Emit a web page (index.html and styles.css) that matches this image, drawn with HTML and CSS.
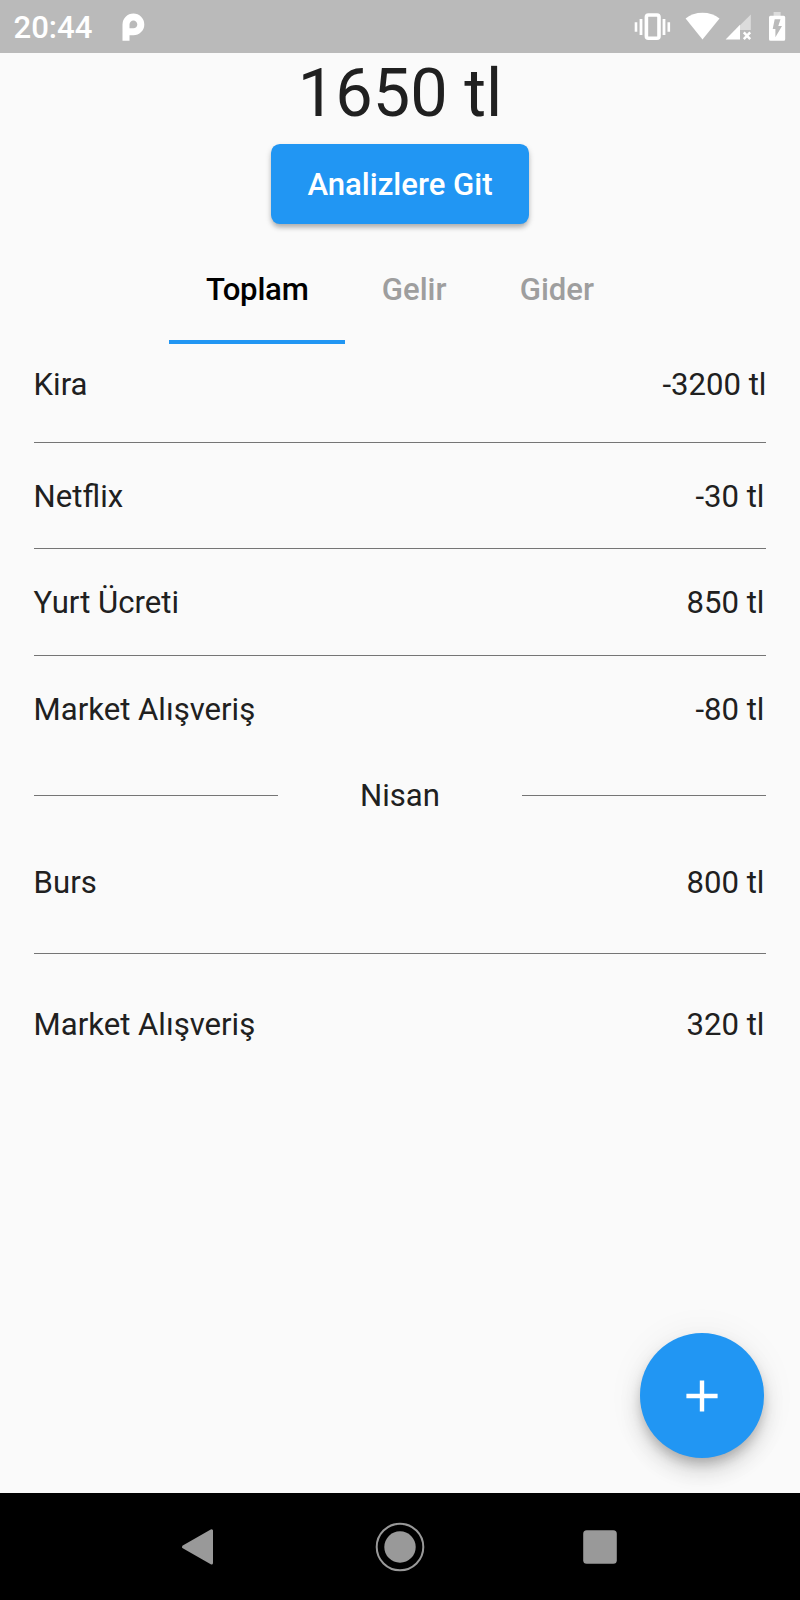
FILE: index.html
```html
<!DOCTYPE html>
<html lang="tr">
<head>
<meta charset="utf-8">
<title>Bütçe</title>
<link rel="stylesheet" href="styles.css">
</head>
<body>
<div class="screen">
  <header class="status">
    <span class="clock">20:44</span>
    <svg class="status-logo" width="24" height="30" viewBox="0 0 24 30" fill="none"><path d="M5 28.700V12.400a7.400 7.400 0 1 1 7.400 7.400H8.500" stroke="#fff" stroke-width="7"/></svg>
    <svg class="status-icons" width="160" height="53" viewBox="0 0 160 53">
      <g fill="none" stroke="#fff">
        <rect x="6.400" y="15" width="12.600" height="23.200" rx="2" stroke-width="3.600"/>
        <path d="M1 19v16M24 19v16" stroke-width="2.800"/>
        <path d="M-4 22.200v9.600M28.800 22.200v9.600" stroke-width="2.600"/>
      </g>
      <path d="M62.500 39.500L45.600 18.600C50 14.800 56 12.800 62.500 12.800s12.600 2 17 5.800z" fill="#fff"/>
      <path d="M110.800 14.500V30H100V25.300z" fill="#dcdcdc"/>
      <path d="M85.600 39.500L100 24.700V39.500z" fill="#fff"/>
      <path d="M103.800 32.300l6.400 6.800M110.200 32.300l-6.400 6.800" stroke="#fff" stroke-width="2.500"/>
      <rect x="133.600" y="12" width="7" height="5" fill="#dcdcdc"/>
      <path d="M130.500 15.700h13.200a1.500 1.500 0 0 1 1.500 1.500v22a1.500 1.500 0 0 1-1.500 1.500h-13.200a1.500 1.500 0 0 1-1.500-1.500v-22a1.500 1.500 0 0 1 1.500-1.500z" fill="#fff"/>
      <path d="M134.700 19.300h5.800l-2.200 6.700h3.700l-6.600 11.200v-8.200h-2.700z" fill="#bababa"/>
    </svg>
  </header>
  <main class="content">
    <h1 class="total">1650 tl</h1>
    <button class="analysis">Analizlere Git</button>
    <nav class="tabs">
      <a class="tab active">Toplam</a>
      <a class="tab">Gelir</a>
      <a class="tab">Gider</a>
    </nav>
    <section class="list">
      <div class="row first"><span>Kira</span><span>-3200 tl</span></div>
      <div class="row"><span>Netflix</span><span>-30 tl</span></div>
      <div class="row"><span>Yurt Ücreti</span><span>850 tl</span></div>
      <div class="row last"><span>Market Alışveriş</span><span>-80 tl</span></div>
      <div class="month"><i class="rule"></i><span>Nisan</span><i class="rule"></i></div>
      <div class="row opening"><span>Burs</span><span>800 tl</span></div>
      <div class="row closing"><span>Market Alışveriş</span><span>320 tl</span></div>
    </section>
    <button class="fab" aria-label="Ekle">
      <svg width="54" height="54" viewBox="0 0 54 54"><path d="M27 11.400v31.200M11.400 27h31.200" stroke="#fff" stroke-width="4.400"/></svg>
    </button>
  </main>
  <footer class="navbar">
    <svg width="54" height="54" viewBox="0 0 54 54"><path d="M10.500 26.900L38.500 10.800V43z" fill="#999" stroke="#999" stroke-width="3" stroke-linejoin="round"/></svg>
    <svg width="54" height="54" viewBox="0 0 54 54"><circle cx="27" cy="27" r="23.300" fill="none" stroke="#999" stroke-width="2"/><circle cx="27" cy="27" r="15.700" fill="#999"/></svg>
    <svg width="54" height="54" viewBox="0 0 54 54"><rect x="10.200" y="10.200" width="33.600" height="33.600" rx="3.500" fill="#999"/></svg>
  </footer>
</div>
</body>
</html>
```

FILE: styles.css
```css
* { box-sizing: border-box; }
body { margin: 0; background: #fafafa; font-family: Roboto, "Liberation Sans", sans-serif; color: #202020; }
.screen { width: 800px; height: 1600px; display: flex; flex-direction: column; overflow: hidden; }
.status { height: 53.33px; flex: none; background: #bababa; color: #fff; display: flex; align-items: flex-start; padding-left: 13.5px; }
.clock { width: 107px; font-size: 31.11px; line-height: 36px; margin-top: 9.5px; font-weight: 500; }
.status-logo { margin-top: 12px; }
.status-icons { margin-left: auto; overflow: visible; }
.content { flex: 1; position: relative; display: flex; flex-direction: column; align-items: center; }
.total { margin: 0; font-size: 66.67px; font-weight: 400; line-height: 80px; }
.analysis { margin: 11px 0 0; height: 80px; padding: 2px 36.2px 0; border: 0; border-radius: 8.9px; background: #2196f3; color: #fff; font: 500 31.11px/36px Roboto, "Liberation Sans", sans-serif; box-shadow: 0 4px 5px -1px rgba(0,0,0,.2), 0 3px 6px rgba(0,0,0,.16); }
.tabs { display: flex; height: 106.67px; margin-top: 13px; }
.tab { padding: 34.5px 36.6px 0; font-size: 31.11px; line-height: 36px; font-weight: 500; color: #9e9e9e; }
.tab.active { color: #000; border-bottom: 4.44px solid #2196f3; letter-spacing: -0.2px; }
.list { width: 100%; padding: 0 33.6px; font-size: 31.11px; line-height: 36px; display: flex; flex-direction: column; }
.row { display: flex; justify-content: space-between; align-items: flex-start; height: 106.67px; padding: 36px 2px 0 0; border-bottom: 1px solid #757575; }
.row.first { height: 98.7px; padding: 23px 0 0; }
.row.last { height: 104px; border: 0; }
.month { display: grid; grid-template-columns: repeat(3, 1fr); align-items: center; text-align: center; height: 72px; }
.rule { height: 1px; background: #757575; }
.row.opening { height: 122px; padding-top: 33.2px; }
.row.closing { border: 0; padding-top: 53.5px; }
.fab { position: absolute; right: 35.56px; bottom: 35.56px; width: 124.44px; height: 124.44px; padding: 0; border: 0; border-radius: 50%; background: #2196f3; display: flex; align-items: center; justify-content: center; box-shadow: 0 7px 11px -2px rgba(0,0,0,.2), 0 13px 22px rgba(0,0,0,.14), 0 2px 38px rgba(0,0,0,.06); }
.navbar { height: 106.67px; flex: none; background: #000; display: grid; grid-template-columns: repeat(3, 200px); justify-content: center; justify-items: center; align-items: center; }
```
